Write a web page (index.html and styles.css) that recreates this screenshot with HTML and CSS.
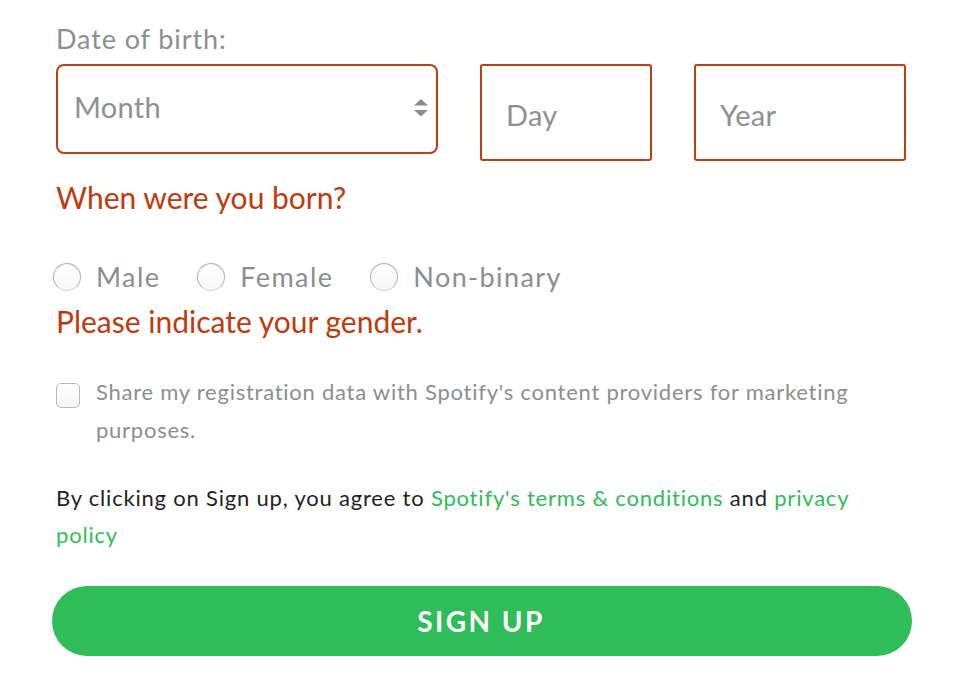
FILE: index.html
```html
<!DOCTYPE html>
<html lang="en">
<head>
<meta charset="utf-8">
<title>Sign up</title>
<link rel="stylesheet" href="styles.css">
</head>
<body>
<main class="form">
  <div class="label">Date of birth:</div>
  <div class="dob-row">
    <div class="field field-month">
      <span class="placeholder">Month</span>
      <svg class="arrows" width="14" height="18" viewBox="0 0 14 18" aria-hidden="true">
        <polygon points="7,0 14,6.5 0,6.5" fill="#8c8c8c"/>
        <polygon points="0,11 14,11 7,17.5" fill="#8c8c8c"/>
      </svg>
    </div>
    <div class="field field-day"><span class="placeholder">Day</span></div>
    <div class="field field-year"><span class="placeholder">Year</span></div>
  </div>
  <p class="error error-born">When were you born?</p>
  <div class="gender">
    <label class="radio"><span class="radio-dot"></span><span class="radio-text">Male</span></label>
    <label class="radio"><span class="radio-dot"></span><span class="radio-text">Female</span></label>
    <label class="radio"><span class="radio-dot"></span><span class="radio-text">Non-binary</span></label>
  </div>
  <p class="error error-gender">Please indicate your gender.</p>
  <label class="check">
    <span class="check-box"></span>
    <span class="check-text">Share my registration data with Spotify's content providers for marketing purposes.</span>
  </label>
  <p class="terms">By clicking on Sign up, you agree to <a href="#">Spotify's terms &amp; conditions</a> and <a href="#">privacy</a> <a href="#">policy</a></p>
  <button class="signup" type="button">SIGN UP</button>
</main>
</body>
</html>
```

FILE: styles.css
```css
* { box-sizing: border-box; }
html, body { margin: 0; padding: 0; background: #ffffff; }
body { font-family: "Lato", "Open Sans", sans-serif; }

.form {
  width: 962px;
  padding: 23px 56px 0 56px;
  display: flex;
  flex-direction: column;
}

.label {
  font-size: 27px;
  line-height: 32px;
  color: #8d8e91;
  letter-spacing: 0.9px;
}

.dob-row {
  display: flex;
  align-items: flex-start;
  gap: 42px;
  margin-top: 9px;
}

.field {
  border: 2px solid #bd3f12;
  background: #fff;
  display: flex;
  align-items: center;
  color: #8f9093;
  font-size: 29px;
  letter-spacing: 0.3px;
}
.field-month {
  width: 382px;
  height: 90px;
  border-radius: 8px;
  padding: 0 8px 5px 16px;
  justify-content: space-between;
}
.field-day {
  width: 172px;
  height: 97px;
  border-radius: 3px;
  padding: 4px 0 0 24px;
}
.field-year {
  width: 212px;
  height: 97px;
  border-radius: 3px;
  padding: 4px 0 0 24px;
}
.arrows { display: block; margin-top: 3px; }

.error {
  margin: 0;
  color: #bf3a0c;
  font-size: 30px;
  line-height: 40px;
  letter-spacing: 0;
}
.error-born { margin-top: 16px; }

.gender {
  display: flex;
  align-items: center;
  gap: 37px;
  margin-top: 44px;
  margin-left: -3px;
}
.radio {
  display: flex;
  align-items: center;
  gap: 15px;
  font-size: 27px;
  line-height: 32px;
  color: #8d8e91;
  letter-spacing: 1.4px;
}
.radio-dot {
  width: 28px;
  height: 28px;
  border-radius: 50%;
  border: 1px solid #b5b5b5;
  border-bottom-color: #d4d4d4;
  background: linear-gradient(#ffffff, #f7f7f7);
  box-shadow: inset 0 1px 1px rgba(0,0,0,0.06);
}
.error-gender { margin-top: 8px; }

.check {
  display: flex;
  align-items: flex-start;
  gap: 16px;
  margin-top: 32px;
}
.check-box {
  flex: none;
  width: 24px;
  height: 25px;
  margin-top: 10px;
  border: 1px solid #b8b8b8;
  border-radius: 5px;
  background: linear-gradient(#ffffff, #f6f6f6);
}
.check-text {
  font-size: 22px;
  line-height: 38px;
  color: #8d8e91;
  letter-spacing: 0.75px;
}

.terms {
  margin: 30px 0 0 0;
  font-size: 22px;
  line-height: 37px;
  color: #222326;
  letter-spacing: 0.8px;
}
.terms a {
  color: #2ebd59;
  text-decoration: none;
}

.signup {
  margin: 33px -6px 0 -4px;
  height: 70px;
  border: 0;
  border-radius: 35px;
  background: #2ebd59;
  color: #ffffff;
  font-family: "Lato", sans-serif;
  font-weight: 700;
  font-size: 28px;
  letter-spacing: 2.4px;
  padding-left: 4px;
  cursor: pointer;
}
```
